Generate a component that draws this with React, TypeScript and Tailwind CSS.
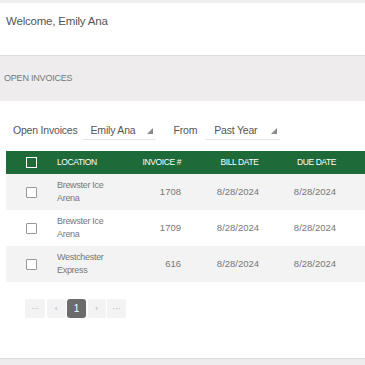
import React from "react";

const rows = [
  { loc: ["Brewster Ice", "Arena"], inv: "1708", bill: "8/28/2024", due: "8/28/2024", bg: "bg-[#f3f3f3]" },
  { loc: ["Brewster Ice", "Arena"], inv: "1709", bill: "8/28/2024", due: "8/28/2024", bg: "bg-white" },
  { loc: ["Westchester", "Express"], inv: "616", bill: "8/28/2024", due: "8/28/2024", bg: "bg-[#f3f3f3]" },
];

function Tri() {
  return (
    <svg width="6" height="6" viewBox="0 0 6 6" className="block">
      <polygon points="6,0 6,6 0,6" fill="#8a8a8a" />
    </svg>
  );
}

export default function App() {
  return (
    <div className="w-[365px] h-[365px] overflow-hidden bg-white text-[#666]" style={{ fontFamily: '"Liberation Sans", Arial, sans-serif' }}>
      <div className="h-[3px] bg-[#eeeeee]" />
      <div className="h-[53px] flex items-start pt-[10px] pl-[6px] text-[11.5px] text-[#555] tracking-[-0.2px] border-b border-[#dcdcdc]">
        Welcome, Emily Ana
      </div>
      <div className="h-[45px] bg-[#eeecec] flex items-center pl-[4px] text-[9px] text-[#777] tracking-[-0.2px]">
        OPEN INVOICES
      </div>
      <div className="pt-[10px] flex items-center h-[50px] text-[10.5px] text-[#555] tracking-[-0.2px]">
        <span className="ml-[13px]">Open Invoices</span>
        <div className="ml-[5px] w-[73px] h-[17px] border-b border-[#e6e6e6] flex items-center pl-[8px] pr-[3px]">
          <span className="flex-1">Emily Ana</span>
          <Tri />
        </div>
        <span className="ml-[18px]">From</span>
        <div className="ml-[9px] w-[74px] h-[17px] border-b border-[#e6e6e6] flex items-center pl-[8px] pr-[3px]">
          <span className="flex-1">Past Year</span>
          <Tri />
        </div>
      </div>
      <div className="ml-[6px]">
        <div className="h-[23px] bg-[#1e6a38] flex items-center text-white text-[8.5px] tracking-[-0.4px]">
          <div className="w-[50px] flex justify-center pl-[1px]">
            <div className="w-[11px] h-[11px] border-[1.5px] border-white" />
          </div>
          <div className="w-[77px] pl-[1px]">LOCATION</div>
          <div className="w-[54px] text-right pr-[6px]">INVOICE #</div>
          <div className="w-[102px] text-center pl-[3px]">BILL DATE</div>
          <div className="w-[52px] text-center pl-[3px]">DUE DATE</div>
        </div>
        {rows.map((r, i) => (
          <div key={i} className={`h-[36px] flex items-center text-[9.5px] text-[#777] ${r.bg}`}>
            <div className="w-[50px] flex justify-center pl-[1px]">
              <div className="w-[11px] h-[11px] border border-[#999] rounded-[1px] bg-white" />
            </div>
            <div className="w-[77px] pl-[1px] leading-[13px] tracking-[-0.3px] text-[9px]">
              <div>{r.loc[0]}</div>
              <div>{r.loc[1]}</div>
            </div>
            <div className="w-[54px] text-right pr-[6px]">{r.inv}</div>
            <div className="w-[102px] text-center">{r.bill}</div>
            <div className="w-[52px] text-center">{r.due}</div>
          </div>
        ))}
      </div>
      <div className="mt-[17px] ml-[25px] flex gap-[1.5px] text-[8px]">
        <div className="w-[20px] h-[19px] bg-[#f3f3f3] rounded-[2px] flex items-center justify-center text-[#999]">···</div>
        <div className="w-[19px] h-[19px] bg-[#f3f3f3] rounded-[2px] flex items-center justify-center text-[#aaa]">‹</div>
        <div className="w-[19px] h-[19px] bg-[#6b6b6b] rounded-[3px] flex items-center justify-center text-white text-[10px]">1</div>
        <div className="w-[18px] h-[19px] bg-[#f3f3f3] rounded-[2px] flex items-center justify-center text-[#aaa]">›</div>
        <div className="w-[19px] h-[19px] bg-[#f3f3f3] rounded-[2px] flex items-center justify-center text-[#999]">···</div>
      </div>
      <div className="mt-[40px] border-t border-[#dcdcdc] h-[10px] bg-[#eeecec]" />
    </div>
  );
}
